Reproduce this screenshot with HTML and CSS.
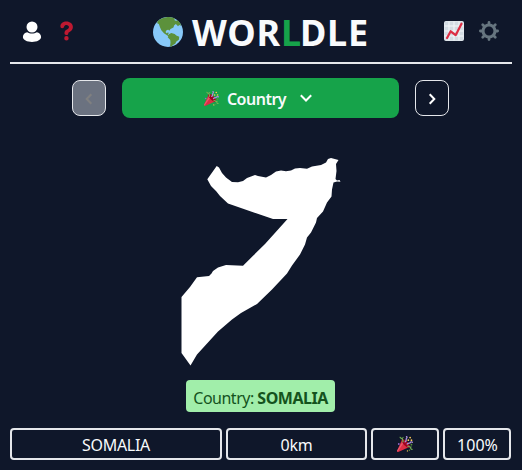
FILE: index.html
```html
<!DOCTYPE html>
<html lang="en">
<head>
<meta charset="utf-8">
<title>Worldle</title>
<link rel="stylesheet" href="styles.css">
</head>
<body>
<svg class="defs" aria-hidden="true">
  <symbol id="party" viewBox="0 0 36 36">
    <path fill="#dd2e44" d="M11.6 7.6c-.2.2-.3.4-.4.6L.2 33.2c-.4 1.4 1.1 3 2.6 2.600l25-11.200c3-3-7-17-16.200-17z"/>
    <path fill="#ea596e" d="M13 12L.7 32l-.5 1.200C0 34 .5 35 1.200 35.400L13.700 17.300z"/>
    <path fill="#a0041e" d="M23 13c5 5 7 10 5 12s-7 0-12-5-7-10-5-12 7 0 12 5z"/>
    <path fill="none" stroke="#aa8dd8" stroke-width="3" stroke-linecap="round" d="M18.500 13c4-3 1-6 3-8s1-3 0-4M23 18c3-3 6-1 7-3s3-2 5-1"/>
    <path fill="none" stroke="#77b255" stroke-width="2.600" stroke-linecap="round" d="M13 13c3-3-3-5-1-8-2 1-4 0-5-2M24 23c4-1 3 3 7 2-1 4 1 5 3 5"/>
    <g fill="#fdcb58"><circle cx="25.500" cy="9.500" r="2"/><circle cx="32.500" cy="9.500" r="2"/><circle cx="29.500" cy="3.500" r="2"/><circle cx="23.500" cy="33.500" r="1.500"/></g>
    <g fill="#5c913b"><circle cx="32.500" cy="19.500" r="2"/><circle cx="28" cy="32" r="1.600"/></g>
    <circle cx="4" cy="18" r="2" fill="#9266cc"/>
  </symbol>
</svg>
<div class="app">
  <header class="header">
    <svg class="icon user" viewBox="0 0 20 22"><circle cx="10" cy="6" r="5.500"/><path d="M.9 16c0-2.500 2-4.500 4.300-4.800 2.600 1.800 7 1.800 9.600 0 2.300.3 4.300 2.300 4.300 4.800 0 3-4.200 4.900-9.100 4.900S.9 19 .9 16z"/></svg>
    <svg class="icon help" viewBox="0 0 36 36"><path fill="#be1931" d="M17 27a4 4 0 1 0 0 8 4 4 0 0 0 0-8zM17 1C11 1 6.100 4.400 6.100 9.400c0 2.300 1.400 3.600 3.300 3.600 2 0 3.200-1.300 3.500-2.900.5-2 1.900-3.100 4.100-3.100 2.700 0 4.500 1.700 4.500 4 0 2.100-1.600 3.200-3.500 4.200-2.600 1.200-4.500 3-4.500 6v1c0 2 1.300 3 3.300 3s3.400-1 3.500-2.900c.1-1.200 1-1.700 2.400-2.500 3.600-1.900 5.900-4.700 5.900-8.800C28.600 5 23.300 1 17 1z"/></svg>
    <h1 class="title">
      <svg class="globe" viewBox="0 0 36 36"><circle cx="18" cy="18" r="18" fill="#88c9f9"/><path fill="#5c913b" d="M5.500 5C9 2 14-.2 19 0c3 .1 5 .8 7.500 2l-1 1.500 1.800 1 2.700-.2 3 3.700.5 2.500-2-1-1.500 1.500-2.500-2.500-2 1.500-1 2.500-3.500 2-1.500 2-1-1.200-2 .4-1.500 2.300 1.300 1.500 2-1.300.5 1.600-1 1.500 2.200 1-.5 1.500-2.800-1.800-3.500-2.500L10 16l-1.500-3.500L7 8.500 5 7.500zM19 20.800l3-1.500 4 1 2 2 3.500 1.500-.5 3.500-3 2-1.300 2.800-2.700 1.500-2 2-1.500-.5.500-4.500-.3-3-3-3.200z"/></svg>
      <span class="word">WOR<span class="accent">L</span>DLE</span>
    </h1>
    <svg class="icon chart" viewBox="0 0 36 36"><rect width="36" height="36" rx="3.500" fill="#e1e8ed"/><rect x="1.500" y="1.500" width="33" height="33" rx="2" fill="#d3dce3"/><path stroke="#f5f8fa" stroke-width="1.800" d="M9 1v34M18 1v34M27 1v34M1 9h34M1 18h34M1 27h34"/><path fill="none" stroke="#dd2e44" stroke-width="4" stroke-linecap="round" stroke-linejoin="round" d="M5.500 30.500L12 18.500l9 7L31.500 5"/></svg>
    <svg class="icon gear" viewBox="-18 -18 36 36">
      <circle r="10.800" fill="none" stroke="#66757f" stroke-width="5.600"/>
      <path stroke="#66757f" stroke-width="5" stroke-linecap="round" d="M0-13v-2.500M0 13v2.500M13 0h2.500M-13 0h-2.500M9-9l2.300-2.300M9 9l2.300 2.300M-9 9l-2.300 2.300M-9-9l-2.300-2.300"/>
    </svg>
  </header>
  <nav class="rounds">
    <button class="step disabled" aria-label="Previous"><svg viewBox="0 0 16 16"><path d="M10.300 3.300L5.700 8l4.600 4.700"/></svg></button>
    <button class="round"><svg class="party"><use href="#party"/></svg><span class="round-name">Country</span><svg class="caret" viewBox="0 0 14 14"><path d="M1.800 4.300L7 9.500l5.200-5.200"/></svg></button>
    <button class="step" aria-label="Next"><svg viewBox="0 0 16 16"><path d="M5.700 3.300L10.300 8l-4.600 4.700"/></svg></button>
  </nav>
  <svg class="shape" viewBox="180 157 162 210"><path d="M207.300 179.300L216.700 166l2.300 1.500 3 5.500 4 4.500 6 4.500 6 .3 5-1.300 4-3 4-1.500 4-1.500 3 1 8 1.500 5-2.500 5-3.500 5-1 5 .8 5-.8 4-2 5-.5 7 .7 5-2.200 9-1.500 5-2.500 2-3.500 3-1 7.500 2-2.500 4 .5 7-1 8 1.500 1.500 2.500-.5 1 1.800-3.500-.3-3.500 1-1.500 7-.5 7-4.500 6-4 9-6 6.500-1 4.500-5 10-4 5-2 7-5 10-8 11-5 8-15 16-15 14.500-16 9-9 6.500-14 12-21 23-6.500 11-9-12.500V297l8.500-10 7-9.700 12-1.300 2.500-2.500 1.500-2.500 5-3.500 8-2.500 17 .7 22-21.700 22.500-25H273L228 203.500l-8-7.500-4-5-5-5z"/></svg>
  <div class="answer">Country: <b>SOMALIA</b></div>
  <div class="guess">
    <div class="cell"><span class="guess-name">SOMALIA</span></div>
    <div class="cell"><span class="distance">0km</span></div>
    <div class="cell"><svg class="party"><use href="#party"/></svg></div>
    <div class="cell"><span class="percent">100%</span></div>
  </div>
</div>
</body>
</html>
```

FILE: styles.css
```css
* { box-sizing: border-box; }
body {
  margin: 0;
  height: 470px;
  overflow: hidden;
  background: #0f172a;
  color: #f8fafc;
  font: 16px/24px "Noto Sans", "Open Sans", sans-serif;
}
.defs { display: none; }
.app { display: flex; flex-direction: column; align-items: center; padding: 0 10px; }
svg { display: block; flex: none; }
.header {
  display: flex;
  align-items: center;
  width: 502px;
  height: 64px;
  border-bottom: 2px solid #e5e7eb;
  padding: 0 13px 0 12px;
}
.user { width: 20px; height: 22px; fill: #fff; margin-top: 2px; }
.help { width: 20px; height: 20px; margin: 0 0 0 15px; }
.title {
  display: flex;
  align-items: center;
  margin: 1px auto 0 76px;
  font-size: 36px;
  line-height: 40px;
  font-weight: 700;
}
.globe { width: 30px; height: 30px; margin-right: 9px; }
.word { width: 176px; margin-top: 3px; white-space: nowrap; letter-spacing: 0.8px; }
.accent { color: #16a34a; letter-spacing: -1.2px; }
.chart { width: 20px; height: 20px; }
.gear { width: 20px; height: 20px; margin-left: 15px; }
.rounds { display: flex; align-items: center; gap: 16px; margin: 14px 0 0; height: 40px; width: 378px; }
button { font: inherit; color: inherit; padding: 0; display: flex; align-items: center; justify-content: center; }
.step { width: 34px; height: 36px; border: 1px solid #e5e7eb; border-radius: 8px; background: none; }
.step svg { width: 16px; height: 16px; margin-top: 1px; fill: none; stroke: #fff; stroke-width: 2; }
.disabled { background: #6b7280; }
.disabled svg { stroke: #808080; }
.round { width: 277px; height: 40px; padding-right: 4px; border: 0; border-radius: 8px; background: #16a34a; font-weight: 600; }
.round .party { width: 15px; height: 15px; margin-top: 1px; }
.round-name { margin: 2px 13px 0 8px; letter-spacing: -0.5px; }
.caret { width: 14px; height: 14px; fill: none; stroke: #fff; stroke-width: 2; }
.shape { width: 162px; height: 210px; margin: 39px 0 0 -1px; fill: #fff; }
.answer {
  width: 149px;
  height: 32px;
  margin: 13px 0 0 -1px;
  padding-top: 6px;
  border-radius: 4px;
  background: #a1eeaa;
  color: #14531d;
  text-align: center;
  white-space: nowrap;
  letter-spacing: -0.5px;
}
.guess { display: grid; grid-template-columns: 212fr 141fr 68fr 68fr; gap: 4px; width: 501px; margin: 16px 1px 0 0; }
.cell { display: flex; align-items: center; justify-content: center; height: 32px; border: 2px solid #e5e7eb; border-radius: 4px; padding-top: 2px; letter-spacing: -0.3px; }
.cell .party { width: 16px; height: 16px; margin-top: -2px; }
.percent { letter-spacing: 0; padding-left: 1px; }
```
